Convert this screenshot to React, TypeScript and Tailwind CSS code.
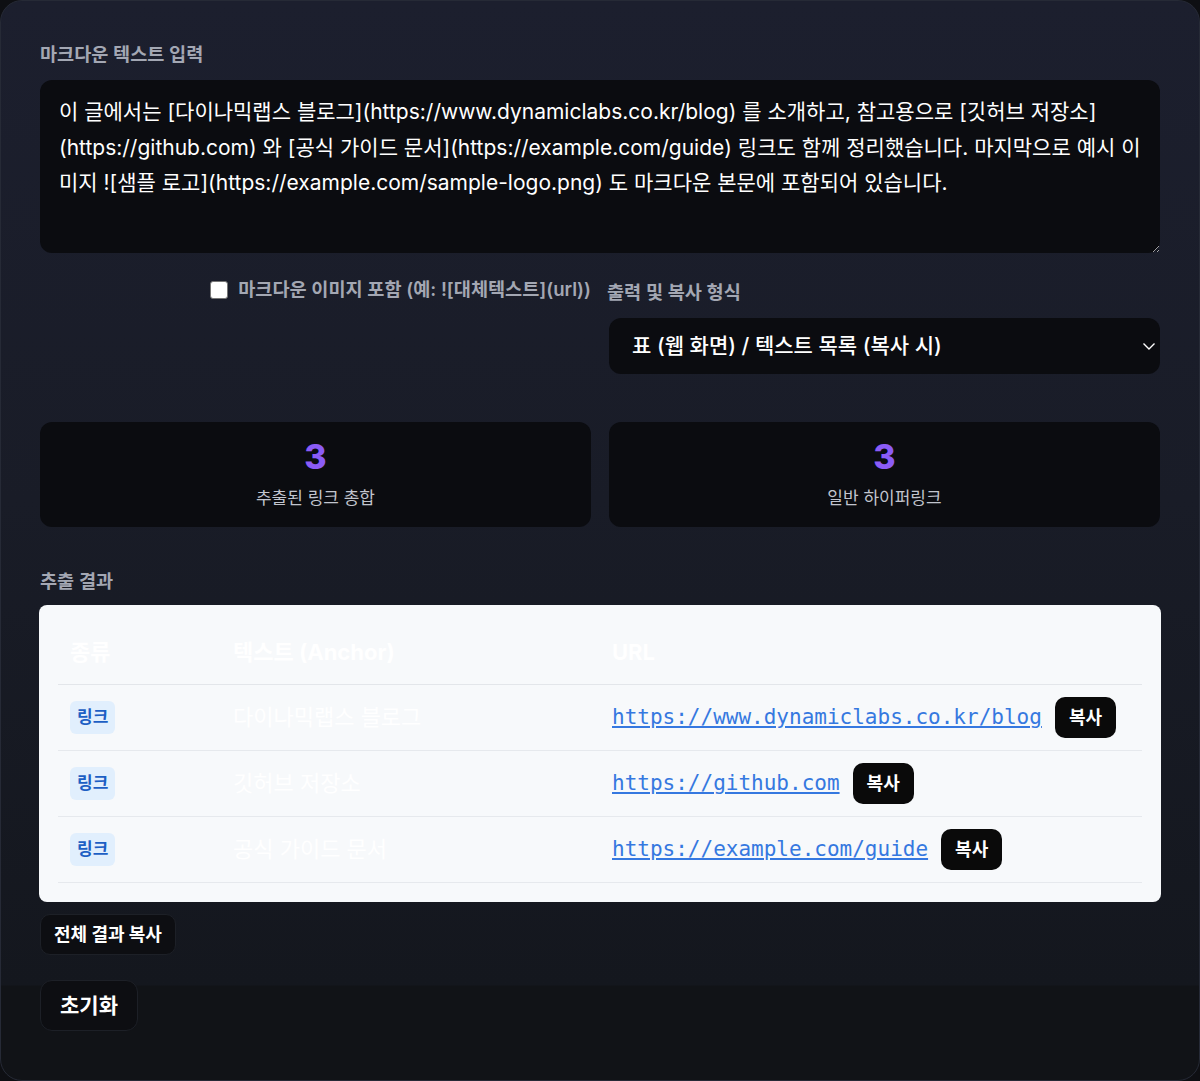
import React from 'react';

const SAMPLE =
  '이 글에서는 [다이나믹랩스 블로그](https://www.dynamiclabs.co.kr/blog) 를 소개하고, 참고용으로 [깃허브 저장소](https://github.com) 와 [공식 가이드 문서](https://example.com/guide) 링크도 함께 정리했습니다. 마지막으로 예시 이미지 ![샘플 로고](https://example.com/sample-logo.png) 도 마크다운 본문에 포함되어 있습니다.';

const links = [
  { kind: '링크', text: '다이나믹랩스 블로그', url: 'https://www.dynamiclabs.co.kr/blog' },
  { kind: '링크', text: '깃허브 저장소', url: 'https://github.com' },
  { kind: '링크', text: '공식 가이드 문서', url: 'https://example.com/guide' }
];

const font = { fontFamily: 'Inter, "Noto Sans CJK KR", sans-serif' };

export default function App() {
  return (
    <div className="min-h-screen bg-[#0e0f13]" style={font}>
      <div className="h-[1081px] rounded-[22px] border border-[#262a36] bg-[linear-gradient(180deg,#1c1f2e_0px,#191c27_500px,#14171e_984px,#111317_985px)] px-[39px] pt-[41px] overflow-hidden">
        <label className="block text-[18.6px] leading-[24px] font-semibold text-[#a3a7b3] mb-[14px]">마크다운 텍스트 입력</label>
        <textarea
          defaultValue={SAMPLE}
          className="block w-full h-[173px] rounded-[12px] bg-[#0b0c10] pl-[19px] pr-[13px] pt-[14px] text-[21px] leading-[35.5px] text-white outline-none"
          style={font}
        />

        <div className="grid grid-cols-2 gap-[18px] mt-[26px]">
          <div className="flex justify-end items-start">
            <label className="flex items-center gap-[10px] text-[18.6px] font-semibold text-[#a3a7b3] h-[22px]">
              <span className="w-[18px] h-[18px] rounded-[3px] bg-white border border-[#767676]" />
              마크다운 이미지 포함 (예: ![대체텍스트](url))
            </label>
          </div>
          <div>
            <div className="text-[18.6px] font-semibold text-[#a3a7b3] h-[22px] -ml-[2px]">출력 및 복사 형식</div>
            <div className="mt-[17px] h-[56px] rounded-[12px] bg-[#0b0c10] flex items-center justify-between pl-[23px] pr-[5px]">
              <span className="text-[21px] font-medium text-white">표 (웹 화면) / 텍스트 목록 (복사 시)</span>
              <svg width="12" height="7" viewBox="0 0 12 7" fill="none" stroke="white" strokeWidth="1.4">
                <polyline points="0.5,0.5 6,6 11.5,0.5" />
              </svg>
            </div>
          </div>
        </div>

        <div className="grid grid-cols-2 gap-[18px] mt-[48px]">
          {[
            { n: 3, label: '추출된 링크 총합' },
            { n: 3, label: '일반 하이퍼링크' }
          ].map((s, i) => (
            <div key={i} className="h-[105px] rounded-[12px] bg-[#0b0c10] flex flex-col items-center pt-[17px]">
              <div className="text-[34px] leading-[36px] font-extrabold text-[#8b5cf6]">{s.n}</div>
              <div className="mt-[11px] text-[17px] text-[#c2c5ce]">{s.label}</div>
            </div>
          ))}
        </div>

        <div className="mt-[41px] text-[18.6px] font-semibold text-[#a3a7b3]">추출 결과</div>

        <div className="mt-[9px] -mx-[1px] rounded-[8px] bg-[#f7f9fb] px-[19px] pt-[15px] pb-[19px]">
          <table className="w-full border-collapse">
            <thead>
              <tr className="border-b border-[#e3e6ea] h-[65px]">
                <th className="w-[163px] text-left pl-[12px] text-[22px] font-bold text-white">종류</th>
                <th className="w-[379px] text-left pl-[12px] text-[22px] font-bold text-white">텍스트 (Anchor)</th>
                <th className="text-left pl-[12px] text-[22px] font-bold text-white">URL</th>
              </tr>
            </thead>
            <tbody>
              {links.map((l) => (
                <tr key={l.url} className="border-b border-[#e6e9ed] h-[66px]">
                  <td className="pl-[12px]">
                    <span className="inline-flex items-center h-[33px] px-[7px] rounded-[6px] bg-[#e1effd] text-[17px] font-bold text-[#1d5fc4]">
                      {l.kind}
                    </span>
                  </td>
                  <td className="pl-[12px] text-[22px] text-white">{l.text}</td>
                  <td className="pl-[12px]">
                    <div className="flex items-center gap-[13px]">
                      <a
                        href={l.url}
                        className="text-[21px] text-[#3578e0] underline"
                        style={{ fontFamily: '"DejaVu Sans Mono", monospace' }}
                      >
                        {l.url}
                      </a>
                      <button className="h-[41px] px-[14px] rounded-[10px] bg-[#0a0a0a] text-white text-[18px] font-bold">
                        복사
                      </button>
                    </div>
                  </td>
                </tr>
              ))}
            </tbody>
          </table>
        </div>

        <button className="mt-[12px] h-[41px] px-[13px] rounded-[10px] bg-[#0d0e12] border border-[#1d2027] text-white text-[18px] font-bold">
          전체 결과 복사
        </button>
        <div>
          <button className="mt-[25px] h-[51px] px-[19px] rounded-[12px] bg-[#0d0e12] border border-[#1d2027] text-white text-[21px] font-bold">
            초기화
          </button>
        </div>
      </div>
    </div>
  );
}
